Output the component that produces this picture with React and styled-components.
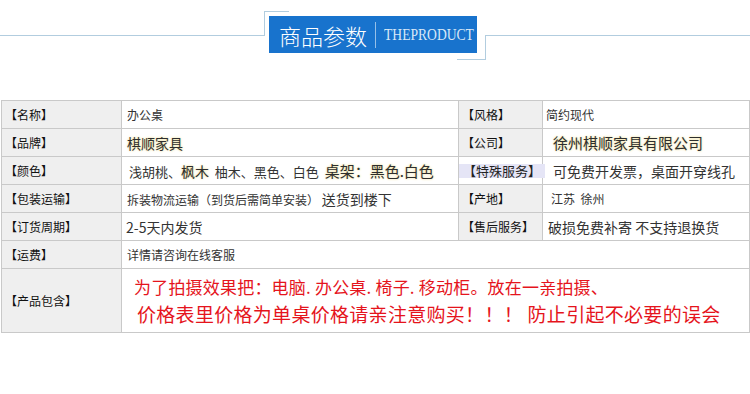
import React from "react";
import styled, { createGlobalStyle } from "styled-components";

const GlobalStyle = createGlobalStyle`
  html, body { margin: 0; padding: 0; background: #fff; }
  body { font-family: "Noto Sans CJK SC", "Liberation Sans", sans-serif; color: #333; }
`;

const Page = styled.div`
  width: 750px;
  height: 394px;
  overflow: hidden;
`;

const Header = styled.div`
  display: flex;
  align-items: flex-start;
  height: 100px;
`;

const Line = styled.div`
  flex: 1;
  height: 35px;
  border-bottom: 1px solid #b2cddf;
`;

const TitleWrap = styled.div`
  position: relative;
  flex: 0 0 222px;
  width: 222px;
  height: 60px;
  box-sizing: border-box;
  padding: 16px 0 0 5px;
  &::before {
    content: "";
    position: absolute;
    left: 0;
    top: 11px;
    width: 24px;
    height: 24px;
    border-left: 1px solid #b2cddf;
    border-top: 1px solid #b2cddf;
  }
  &::after {
    content: "";
    position: absolute;
    right: 0;
    top: 35px;
    width: 28px;
    height: 24px;
    border-right: 1px solid #b2cddf;
    border-bottom: 1px solid #b2cddf;
  }
`;

const TitleBox = styled.div`
  display: flex;
  align-items: center;
  width: 208px;
  height: 37px;
  background: #1873cd;
  padding-left: 10px;
  box-sizing: border-box;
  overflow: hidden;
`;

const TitleCn = styled.span`
  flex-shrink: 0;
  white-space: nowrap;
  font-size: 22px;
  line-height: 1;
  color: #fff;
  font-weight: 300;
`;

const TitleDivider = styled.span`
  flex-shrink: 0;
  width: 1px;
  height: 26px;
  background: rgba(255, 255, 255, 0.55);
  margin: 0 8px 0 8px;
`;

const TitleEn = styled.span`
  flex-shrink: 0;
  font-family: "Liberation Serif", serif;
  font-size: 17px;
  line-height: 1;
  color: #d9e8f7;
  display: inline-block;
  transform: scaleX(0.8);
  transform-origin: left center;
  white-space: nowrap;
`;

const Table = styled.table`
  border-collapse: collapse;
  width: 748px;
  margin-left: 1px;
  table-layout: fixed;
`;

const Row = styled.tr`
  height: ${(p) => (p.$tall ? "64px" : "28px")};
`;

const Label = styled.td`
  border: 1px solid #c9c9c9;
  background: ${(p) => (p.$plain ? "#fff" : "#efefef")};
  font-size: 12px;
  color: #111;
  padding: 0 0 0 ${(p) => (p.$pad ?? 3)}px;
  vertical-align: middle;
  white-space: nowrap;
  line-height: 1;
  overflow: visible;
`;

const Value = styled.td`
  border: 1px solid #c9c9c9;
  background: #fff;
  font-size: ${(p) => p.$size || 12}px;
  color: #333;
  padding: 0 0 0 ${(p) => (p.$pad ?? 5)}px;
  vertical-align: middle;
  white-space: nowrap;
  line-height: 1;
`;

const Glow = styled.span`
  font-size: ${(p) => p.$size || 14}px;
  color: #2e2e2e;
  font-weight: 400;
  text-shadow: 0 0 2px #eee0a0, 0 0 3px #f3eabd;
`;

const Big = styled.span`
  font-size: ${(p) => p.$size || 14}px;
  color: #333;
`;

const Lavender = styled.span`
  display: inline-block;
  box-sizing: border-box;
  width: 86px;
  padding-left: 4px;
  font-size: 13px;
  line-height: 14px;
  background: #e5e5f6;
  color: #222;
`;

const RedBlock = styled.div`
  display: flex;
  flex-direction: column;
  gap: 9px;
  color: #e5141c;
`;

const RedLine = styled.div`
  font-size: ${(p) => p.$size}px;
  padding-left: ${(p) => p.$indent}px;
  letter-spacing: ${(p) => p.$ls || 0}px;
  line-height: 1;
`;

export default function App() {
  return (
    <Page>
      <GlobalStyle />
      <Header>
        <Line />
        <TitleWrap>
          <TitleBox>
            <TitleCn>商品参数</TitleCn>
            <TitleDivider />
            <TitleEn>THEPRODUCT</TitleEn>
          </TitleBox>
        </TitleWrap>
        <Line />
      </Header>
      <Table>
        <colgroup>
          <col style={{ width: 120 }} />
          <col style={{ width: 337 }} />
          <col style={{ width: 84 }} />
          <col style={{ width: 207 }} />
        </colgroup>
        <tbody>
          <Row>
            <Label>【名称】</Label>
            <Value>办公桌</Value>
            <Label>【风格】</Label>
            <Value $pad={3}>简约现代</Value>
          </Row>
          <Row>
            <Label>【品牌】</Label>
            <Value $pad={5}>
              <Glow $size={14}>棋顺家具</Glow>
            </Value>
            <Label>【公司】</Label>
            <Value $pad={10}>
              <Glow $size={15}>徐州棋顺家具有限公司</Glow>
            </Value>
          </Row>
          <Row>
            <Label>【颜色】</Label>
            <Value $size={13} $pad={7}>
              浅胡桃、<Glow $size={14}>枫木</Glow>&nbsp;&nbsp;柚木、黑色、白色&nbsp;&nbsp;
              <Glow $size={15}>桌架：黑色.白色</Glow>
            </Value>
            <Label $plain $pad={0}>
              <Lavender>【特殊服务】</Lavender>
            </Label>
            <Value $size={14} $pad={10}>可免费开发票，桌面开穿线孔</Value>
          </Row>
          <Row>
            <Label>【包装运输】</Label>
            <Value>
              拆装物流运输（到货后需简单安装） <Big>送货到楼下</Big>
            </Value>
            <Label>【产地】</Label>
            <Value $pad={8}>江苏&nbsp;&nbsp;徐州</Value>
          </Row>
          <Row>
            <Label>【订货周期】</Label>
            <Value $size={14} $pad={4}>2-5天内发货</Value>
            <Label>【售后服务】</Label>
            <Value $size={14} $pad={5}>破损免费补寄 不支持退换货</Value>
          </Row>
          <Row>
            <Label>【运费】</Label>
            <Value colSpan={3}>详情请咨询在线客服</Value>
          </Row>
          <Row $tall>
            <Label>【产品包含】</Label>
            <Value colSpan={3} $pad={0}>
              <RedBlock>
                <RedLine $size={17} $indent={12} $ls={0.2}>
                  为了拍摄效果把：电脑. 办公桌. 椅子. 移动柜。放在一亲拍摄、
                </RedLine>
                <RedLine $size={19} $indent={15} $ls={0.3}>
                  价格表里价格为单桌价格请亲注意购买！！！ 防止引起不必要的误会
                </RedLine>
              </RedBlock>
            </Value>
          </Row>
        </tbody>
      </Table>
    </Page>
  );
}
